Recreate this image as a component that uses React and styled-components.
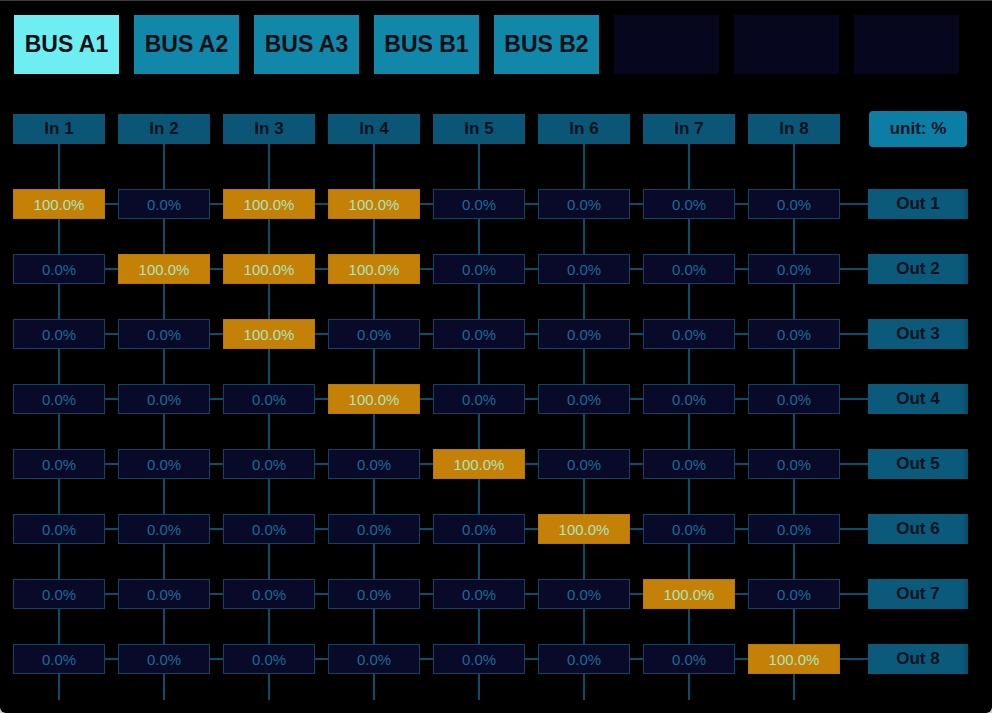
import React from "react";
import styled, { createGlobalStyle } from "styled-components";

const Global = createGlobalStyle`
  html, body { margin: 0; padding: 0; background: #cfcfcf; }
  body { font-family: "Liberation Sans", Arial, sans-serif; }
`;

const Frame = styled.div`
  width: 992px;
  height: 713px;
  box-sizing: border-box;
  background: #000;
  border-top: 1px solid #3c3c3c;
  border-radius: 0 0 6px 6px;
  padding: 14px 0 0 0;
  overflow: hidden;
`;

const BusBar = styled.div`
  display: flex;
  gap: 15px;
  padding-left: 14px;
`;

const BusButton = styled.div`
  width: 105px;
  height: 59px;
  display: flex;
  align-items: center;
  justify-content: center;
  font-size: 23px;
  font-weight: bold;
  color: #061014;
  background: ${(p) =>
    p.$variant === "active" ? "#6eeef2" : p.$variant === "empty" ? "#06061e" : "#1188a9"};
`;

const Matrix = styled.div`
  display: grid;
  grid-template-columns: repeat(8, 92px) 115px;
  grid-template-rows: 43px repeat(8, 30px);
  column-gap: 13px;
  row-gap: 35px;
  margin: 37px 0 0 13px;
`;

const VLine = styled.div`
  grid-column: ${(p) => p.$col};
  grid-row: 1 / -1;
  justify-self: center;
  width: 2px;
  margin-top: 10px;
  margin-bottom: -26px;
  background: #0a4e6d;
  z-index: 0;
`;

const HLine = styled.div`
  grid-column: 1 / -1;
  grid-row: ${(p) => p.$row};
  align-self: center;
  height: 2px;
  margin-right: 10px;
  background: #0a4e6d;
  z-index: 0;
`;

const InHeader = styled.div`
  grid-column: ${(p) => p.$col};
  grid-row: 1;
  align-self: start;
  margin-top: 3px;
  height: 30px;
  display: flex;
  align-items: center;
  justify-content: center;
  background: #0b5676;
  color: #03121c;
  font-size: 17px;
  font-weight: bold;
  z-index: 1;
`;

const UnitButton = styled.div`
  grid-column: 9;
  grid-row: 1;
  align-self: start;
  justify-self: end;
  width: 98px;
  height: 36px;
  margin-right: 1px;
  border-radius: 4px;
  display: flex;
  align-items: center;
  justify-content: center;
  background: #0c7ea5;
  color: #04161f;
  font-size: 17px;
  font-weight: bold;
  z-index: 1;
`;

const Cell = styled.div`
  grid-column: ${(p) => p.$col};
  grid-row: ${(p) => p.$row};
  box-sizing: border-box;
  display: flex;
  align-items: center;
  justify-content: center;
  font-size: 15px;
  z-index: 1;
  background: ${(p) => (p.$on ? "#c58008" : "#09092a")};
  border: 1px solid ${(p) => (p.$on ? "#b97806" : "#0c4664")};
  color: ${(p) => (p.$on ? "#a8e6bc" : "#196c94")};
`;

const OutLabel = styled.div`
  grid-column: 9;
  grid-row: ${(p) => p.$row};
  justify-self: end;
  width: 100px;
  box-sizing: border-box;
  display: flex;
  align-items: center;
  justify-content: center;
  background: linear-gradient(to right, #0b5a7c 0%, #0b5a7c 94%, #094a66 100%);
  color: #03121c;
  font-size: 17px;
  font-weight: bold;
  z-index: 1;
`;

const buses = [
  { label: "BUS A1", variant: "active" },
  { label: "BUS A2", variant: "normal" },
  { label: "BUS A3", variant: "normal" },
  { label: "BUS B1", variant: "normal" },
  { label: "BUS B2", variant: "normal" },
  { label: "", variant: "empty" },
  { label: "", variant: "empty" },
  { label: "", variant: "empty" },
];

const onMap = [
  [1, 3, 4],
  [2, 3, 4],
  [3],
  [4],
  [5],
  [6],
  [7],
  [8],
];

const cols = [1, 2, 3, 4, 5, 6, 7, 8];

export default function App() {
  return (
    <>
      <Global />
      <Frame>
        <BusBar>
          {buses.map((b, i) => (
            <BusButton key={i} $variant={b.variant}>
              {b.label}
            </BusButton>
          ))}
        </BusBar>
        <Matrix>
          {cols.map((c) => (
            <VLine key={"v" + c} $col={c} />
          ))}
          {onMap.map((_, r) => (
            <HLine key={"h" + r} $row={r + 2} />
          ))}
          {cols.map((c) => (
            <InHeader key={"in" + c} $col={c}>
              In {c}
            </InHeader>
          ))}
          <UnitButton>unit: %</UnitButton>
          {onMap.map((on, r) =>
            cols.map((c) => {
              const active = on.includes(c);
              return (
                <Cell key={r + "-" + c} $row={r + 2} $col={c} $on={active}>
                  {active ? "100.0%" : "0.0%"}
                </Cell>
              );
            })
          )}
          {onMap.map((_, r) => (
            <OutLabel key={"out" + r} $row={r + 2}>
              Out {r + 1}
            </OutLabel>
          ))}
        </Matrix>
      </Frame>
    </>
  );
}
